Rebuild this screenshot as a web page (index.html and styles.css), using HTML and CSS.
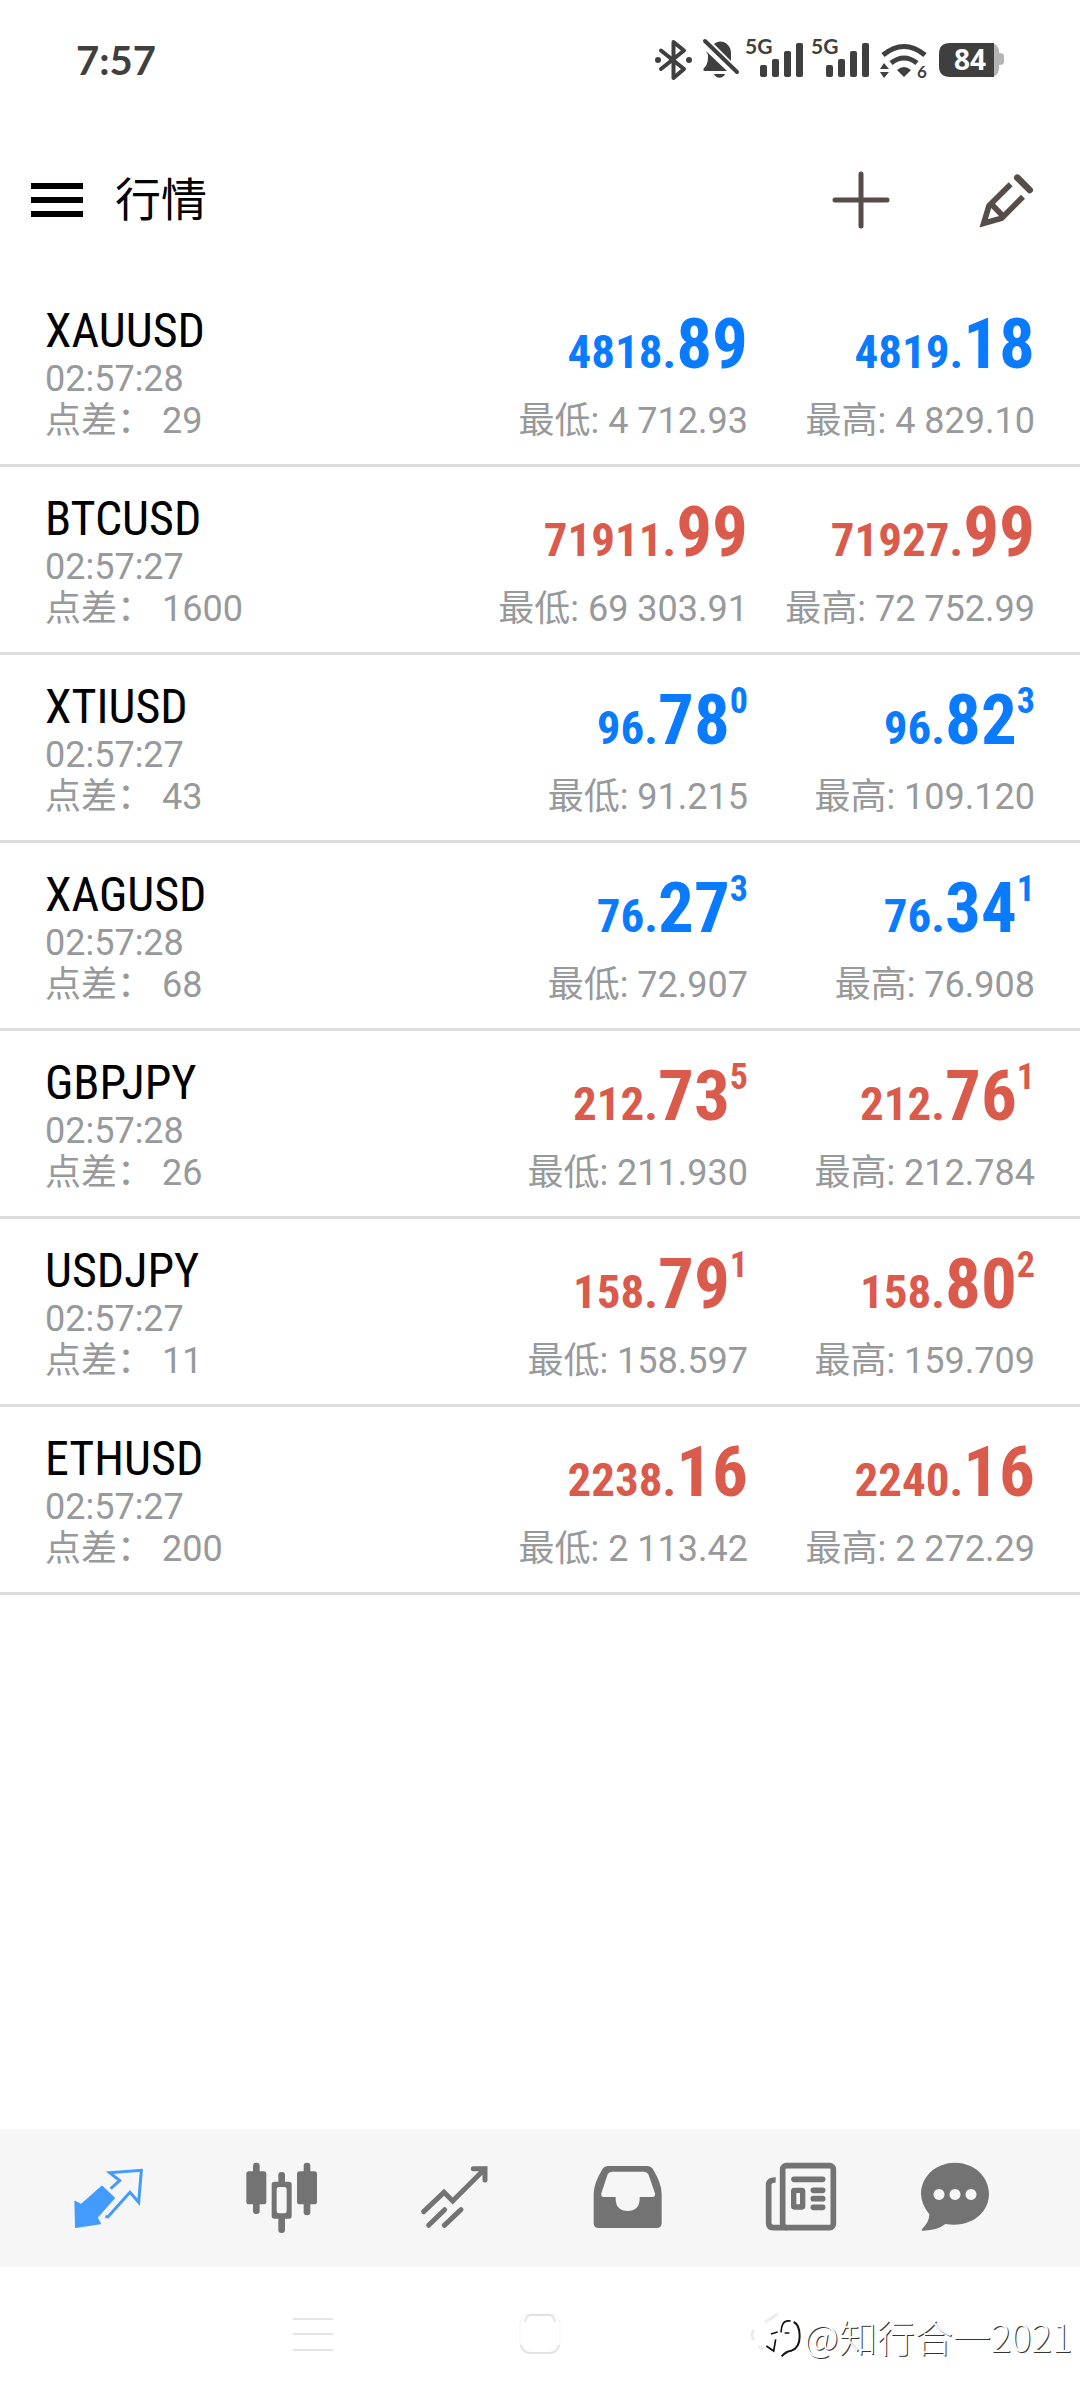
FILE: index.html
```html
<!DOCTYPE html>
<html lang="zh-CN">
<head>
<meta charset="utf-8">
<meta name="viewport" content="width=device-width">
<title>行情</title>
<link rel="stylesheet" href="styles.css">
</head>
<body>
<div class="screen">
  <div class="status">
    <span class="clock">7:57</span>
    <div class="status-icons">
      <svg width="41" height="48" viewBox="655 35 41 48" fill="none" stroke="#3f3f3f" stroke-width="4" stroke-linejoin="round" stroke-linecap="round"><path d="M661 49.500 684 68 673.500 77V41L684 49.500 661 68"/><circle cx="658" cy="59" r="3" fill="#3f3f3f" stroke="none"/><circle cx="689" cy="59" r="3" fill="#3f3f3f" stroke="none"/></svg>
      <svg width="37" height="48" viewBox="702 35 37 48" fill="#3f3f3f"><path d="M714 43c6-6 17-1 17 9v8zM706 50l21 20h-22c-2 0-2-2-1-3 4-3 4-9 4-13zM714 73h11c-2 5-9 5-11 0z"/><path d="M705 40 737 71" stroke="#3f3f3f" stroke-width="4" stroke-linecap="round"/></svg>
      <svg width="60" height="48" viewBox="745 35 60 48" fill="#3f3f3f"><text x="745" y="53" class="net">5G</text><rect x="760" y="64" width="7" height="12" rx="2"/><rect x="772" y="58" width="7" height="18" rx="2"/><rect x="784" y="50" width="7" height="26" rx="2"/><rect x="796" y="42" width="7" height="34" rx="2"/></svg>
      <svg width="60" height="48" viewBox="745 35 60 48" fill="#3f3f3f"><text x="745" y="53" class="net">5G</text><rect x="760" y="64" width="7" height="12" rx="2"/><rect x="772" y="58" width="7" height="18" rx="2"/><rect x="784" y="50" width="7" height="26" rx="2"/><rect x="796" y="42" width="7" height="34" rx="2"/></svg>
      <svg width="52" height="48" viewBox="877 35 52 48" fill="#3f3f3f"><path d="M883 54q21-17 42 0M891 62q13-10 26 0" fill="none" stroke="#3f3f3f" stroke-width="5"/><path d="M897 69q7-6 14 0l-7 7zM880 68l4-6 5 6zM880 71h9l-5 6z"/><text x="917" y="77" class="gen">6</text></svg>
      <svg width="69" height="48" viewBox="935 35 69 48"><path d="M990 42q8 0 9 8v2q5 0 5 3v6q0 3-5 3v4q-1 8-9 8z" fill="#b4b4b4"/><path d="M950 42h44v34h-44q-11 0-11-11V53q0-11 11-11z" fill="#3f3f3f"/><text x="970" y="69" class="charge">84</text></svg>
    </div>
  </div>

  <header class="bar">
    <button class="icon-button" aria-label="菜单"><svg width="52" height="52" viewBox="0 0 52 52"><path d="M0 12h52M0 26h52M0 40h52" stroke="#000" stroke-width="6"/></svg></button>
    <h1>行情</h1>
    <button class="icon-button" aria-label="添加"><svg width="58" height="58" viewBox="0 0 58 58"><path d="M29 3v52M3 29h52" stroke="#564d4b" stroke-width="5" stroke-linecap="round"/></svg></button>
    <button class="icon-button edit" aria-label="编辑"><svg width="54" height="54" viewBox="600 68 162 162" fill="none" stroke="#564d4b"><path d="M692 102 627 166 611 219 665 204 729 139M637 164 668 196" stroke-width="17" stroke-linejoin="miter"/><path d="M712 82 749 119" stroke-width="20" stroke-linecap="round"/></svg></button>
  </header>

  <main>
    <table class="quotes">
      <tbody>
        <tr class="up"><td><div class="symbol">XAUUSD</div><div class="meta">02:57:28</div><div class="meta">点差： 29</div></td>
          <td><div class="price"><span>4818.</span>89</div><div class="meta">最低: 4 712.93</div></td>
          <td><div class="price"><span>4819.</span>18</div><div class="meta">最高: 4 829.10</div></td></tr>
        <tr class="down"><td><div class="symbol">BTCUSD</div><div class="meta">02:57:27</div><div class="meta">点差： 1600</div></td>
          <td><div class="price"><span>71911.</span>99</div><div class="meta">最低: 69 303.91</div></td>
          <td><div class="price"><span>71927.</span>99</div><div class="meta">最高: 72 752.99</div></td></tr>
        <tr class="up"><td><div class="symbol">XTIUSD</div><div class="meta">02:57:27</div><div class="meta">点差： 43</div></td>
          <td><div class="price"><span>96.</span>78<sup>0</sup></div><div class="meta">最低: 91.215</div></td>
          <td><div class="price"><span>96.</span>82<sup>3</sup></div><div class="meta">最高: 109.120</div></td></tr>
        <tr class="up"><td><div class="symbol">XAGUSD</div><div class="meta">02:57:28</div><div class="meta">点差： 68</div></td>
          <td><div class="price"><span>76.</span>27<sup>3</sup></div><div class="meta">最低: 72.907</div></td>
          <td><div class="price"><span>76.</span>34<sup>1</sup></div><div class="meta">最高: 76.908</div></td></tr>
        <tr class="down"><td><div class="symbol">GBPJPY</div><div class="meta">02:57:28</div><div class="meta">点差： 26</div></td>
          <td><div class="price"><span>212.</span>73<sup>5</sup></div><div class="meta">最低: 211.930</div></td>
          <td><div class="price"><span>212.</span>76<sup>1</sup></div><div class="meta">最高: 212.784</div></td></tr>
        <tr class="down"><td><div class="symbol">USDJPY</div><div class="meta">02:57:27</div><div class="meta">点差： 11</div></td>
          <td><div class="price"><span>158.</span>79<sup>1</sup></div><div class="meta">最低: 158.597</div></td>
          <td><div class="price"><span>158.</span>80<sup>2</sup></div><div class="meta">最高: 159.709</div></td></tr>
        <tr class="down"><td><div class="symbol">ETHUSD</div><div class="meta">02:57:27</div><div class="meta">点差： 200</div></td>
          <td><div class="price"><span>2238.</span>16</div><div class="meta">最低: 2 113.42</div></td>
          <td><div class="price"><span>2240.</span>16</div><div class="meta">最高: 2 272.29</div></td></tr>
      </tbody>
    </table>
  </main>

  <nav class="tabs">
    <a href="#quotes" aria-label="行情"><svg width="80" height="80" viewBox="87 114 240 240" fill="none" stroke="#439cfd" stroke-linejoin="round"><path d="M186 199 223 234 171 293 181 311 107 322 105 244 123 254z" fill="#439cfd" stroke-width="4"/><path d="M212 206 239 182 209 158 304 151 296 247 270 217 204 290H196" stroke-width="9" stroke-linejoin="miter"/></svg></a>
    <a href="#charts" aria-label="图表"><svg width="80" height="80" viewBox="604 114 240 240" fill="#737373"><rect x="617" y="154" width="60" height="99" rx="8"/><rect x="769" y="154" width="60" height="99" rx="8"/><rect x="637" y="128" width="20" height="154" rx="9"/><rect x="789" y="128" width="20" height="158" rx="9"/><rect x="713" y="156" width="20" height="40" rx="9"/><rect x="713" y="285" width="20" height="54" rx="9"/><path fill-rule="evenodd" d="M701 185h44q8 0 8 8v95q0 8-8 8h-44q-8 0-8-8v-95q0-8 8-8zm14 16q-7 0-7 7v65q0 7 7 7h16q7 0 7-7v-65q0-7-7-7z"/></svg></a>
    <a href="#trade" aria-label="交易"><svg width="80" height="80" viewBox="1124 114 240 240" fill="none" stroke="#737373" stroke-width="15" stroke-linecap="round"><path d="M1150 275 1211 217 1237 243 1334 146M1299 146h35v34M1165 316 1213 269M1212 316 1262 269"/></svg></a>
    <a href="#history" aria-label="历史"><svg width="80" height="80" viewBox="83 114 240 240" fill="#737373"><path fill-rule="evenodd" d="M143 138h118q11 0 16 8 27 44 27 75v88q0 15-15 15H115q-15 0-15-15v-88q0-31 27-75 5-8 16-8zm12 17q-9 0-13 8l-19 57q-2 11 8 11h35v8q2 33 36 34 34-1 36-34v-8h38q10 0 8-11l-20-57q-4-8-13-8z"/></svg></a>
    <a href="#news" aria-label="新闻"><svg width="80" height="80" viewBox="603 114 240 240" fill="none" stroke="#737373" stroke-width="17" stroke-linecap="round"><rect x="668" y="137" width="152" height="186" rx="11"/><path d="M647 180q-21-1-21 15v114q0 14 14 14h40" stroke-linecap="butt"/><path d="M702 178h86M760 211h28M760 236h28M760 262h28"/><rect x="701" y="211" width="27" height="50" rx="2" stroke-width="16"/></svg></a>
    <a href="#messages" aria-label="消息"><svg width="80" height="80" viewBox="1065 114 240 240" fill="#737373"><path fill-rule="evenodd" d="M1185 128c57 0 102 41 102 94s-50 103-131 90q-23 19-66 20-8 0-3-6 21-20 21-43-24-29-25-61c0-53 45-94 102-94zm-48 79a16.500 16.500 0 1 0 .1 0zm48 0a16.500 16.500 0 1 0 .1 0zm48 0a16.500 16.500 0 1 0 .1 0z"/></svg></a>
  </nav>

  <footer class="system">
    <button aria-label="最近任务"><svg width="44" height="44" viewBox="0 0 44 44" stroke="#e4e4e4" stroke-width="2"><path d="M2 7h40M2 22h40M2 38h40"/></svg></button>
    <button aria-label="主屏幕"><svg width="44" height="44" viewBox="0 0 44 44" fill="none"><rect x="2" y="2" width="40" height="39" rx="10" stroke="#f4f4f4"/><path d="M3 33q2 8 10 8h18q8 0 10-8M7 10q1-7 6-7h18q5 0 6 7" stroke="#e2e2e2" stroke-width="2"/></svg></button>
    <button aria-label="返回"><svg width="44" height="44" viewBox="0 0 44 44" fill="none" stroke="#ececec" stroke-width="3"><path d="M33 2 20 10M9 18q-4 5 0 10M14 34l4 4"/></svg></button>
    <div class="watermark">
      <svg width="44" height="52" viewBox="45 80 132 156" fill="none" stroke="#111"><path d="M137 113q-18-3-24 10-4 8-5 24M78 152 98 146M119 149h14M64 188 86 203 92 168" stroke-width="5"/><path d="M146 116q18 8 18 42 0 36-25 44-17 2-29 17" stroke-width="6"/></svg>
      <span>@知行合一2021</span>
    </div>
  </footer>
</div>
</body>
</html>
```
FILE: styles.css
```css
* { box-sizing: border-box; }

body {
  margin: 0;
  background: #fff;
  font-family: Roboto, "Noto Sans CJK SC", sans-serif;
}

button {
  display: flex;
  justify-content: center;
  align-items: center;
  padding: 0;
  border: 0;
  background: none;
}

svg {
  display: block;
  overflow: visible;
}

.screen {
  display: flex;
  flex-direction: column;
  min-height: 100vh;
}

/* Status bar */
.status {
  display: flex;
  justify-content: space-between;
  align-items: center;
  height: 120px;
  padding: 0 76px;
}
.clock {
  color: #3f3f3f;
  font: 700 40px/48px Lato, sans-serif;
}
.status-icons { display: flex; gap: 6px; }
.net { font: 700 21px Lato, sans-serif; }
.gen { font: 700 17px Lato, sans-serif; }
.charge {
  fill: #fff;
  font: 700 28px "Open Sans", sans-serif;
  text-anchor: middle;
}

/* Title bar */
.bar {
  display: flex;
  align-items: center;
  height: 159px;
  padding: 0 46px 0 31px;
}
.bar h1 {
  flex: 1;
  margin: 0 0 0 32px;
  font-size: 46px;
  font-weight: 400;
  line-height: 60px;
}
.edit { margin-left: 90px; }

main { flex: 1; }

/* Quotes */
.quotes {
  width: 100%;
  border-spacing: 0;
}
.quotes td {
  padding: 27px 37px 22px 0;
  border-bottom: 3px solid #dedede;
  text-align: right;
  vertical-align: top;
  white-space: nowrap;
}
.quotes td:first-child {
  padding-left: 45px;
  text-align: left;
}
.quotes td:last-child {
  width: 295px;
  padding-right: 45px;
}
.symbol {
  margin-bottom: 2px;
  color: #000;
  font: 400 48px/50px "Roboto Condensed", sans-serif;
}
.meta {
  color: #97999b;
  font-size: 36px;
  line-height: 42px;
}
.price {
  margin-bottom: 18px;
  font: 700 71px/76px "Roboto Condensed", sans-serif;
}
.price span { font-size: 47px; line-height: 1; }
.price sup {
  font-size: 36px;
  line-height: 0;
  vertical-align: 31px;
}
.up .price { color: #0a7aff; }
.down .price { color: #da5a4c; }

/* App tabs */
.tabs {
  display: grid;
  grid-template-columns: repeat(5, 173fr) 135fr;
  height: 138px;
  padding: 0 58px 0 22px;
  background: #f6f6f6;
}
.tabs a {
  display: flex;
  justify-content: center;
  align-items: center;
}

/* System navigation */
.system {
  position: relative;
  display: grid;
  grid-template-columns: repeat(3, 1fr);
  height: 133px;
  padding: 0 199px;
}
.watermark {
  position: absolute;
  right: 8px;
  bottom: 36px;
  display: flex;
  align-items: center;
  color: #fff;
  font: 300 38px/56px "Noto Sans CJK SC", sans-serif;
  text-shadow: 1px 1px 0 #333;
}
```
